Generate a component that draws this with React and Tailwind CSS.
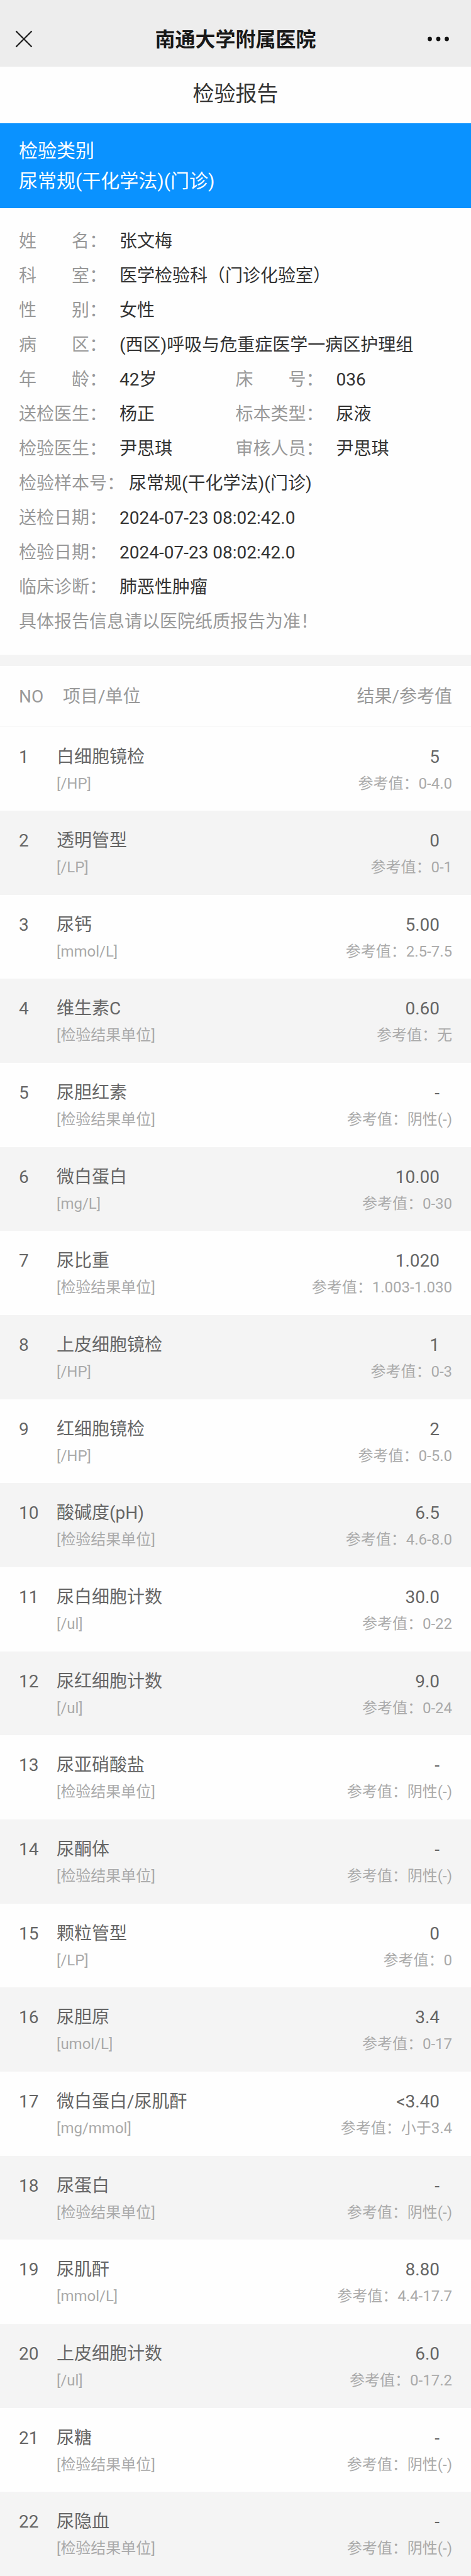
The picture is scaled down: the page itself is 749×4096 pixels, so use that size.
const DETAILS = [
  [["姓　　名：", "张文梅"]],
  [["科　　室：", "医学检验科（门诊化验室）"]],
  [["性　　别：", "女性"]],
  [["病　　区：", "(西区)呼吸与危重症医学一病区护理组"]],
  [["年　　龄：", "42岁"], ["床　　号：", "036"]],
  [["送检医生：", "杨正"], ["标本类型：", "尿液"]],
  [["检验医生：", "尹思琪"], ["审核人员：", "尹思琪"]],
  [["检验样本号：", "尿常规(干化学法)(门诊)"]],
  [["送检日期：", "2024-07-23 08:02:42.0"]],
  [["检验日期：", "2024-07-23 08:02:42.0"]],
  [["临床诊断：", "肺恶性肿瘤"]],
];

const RESULTS = [
  ["白细胞镜检", "/HP", "5", "0-4.0"],
  ["透明管型", "/LP", "0", "0-1"],
  ["尿钙", "mmol/L", "5.00", "2.5-7.5"],
  ["维生素C", "检验结果单位", "0.60", "无"],
  ["尿胆红素", "检验结果单位", "-", "阴性(-)"],
  ["微白蛋白", "mg/L", "10.00", "0-30"],
  ["尿比重", "检验结果单位", "1.020", "1.003-1.030"],
  ["上皮细胞镜检", "/HP", "1", "0-3"],
  ["红细胞镜检", "/HP", "2", "0-5.0"],
  ["酸碱度(pH)", "检验结果单位", "6.5", "4.6-8.0"],
  ["尿白细胞计数", "/ul", "30.0", "0-22"],
  ["尿红细胞计数", "/ul", "9.0", "0-24"],
  ["尿亚硝酸盐", "检验结果单位", "-", "阴性(-)"],
  ["尿酮体", "检验结果单位", "-", "阴性(-)"],
  ["颗粒管型", "/LP", "0", "0"],
  ["尿胆原", "umol/L", "3.4", "0-17"],
  ["微白蛋白/尿肌酐", "mg/mmol", "<3.40", "小于3.4"],
  ["尿蛋白", "检验结果单位", "-", "阴性(-)"],
  ["尿肌酐", "mmol/L", "8.80", "4.4-17.7"],
  ["上皮细胞计数", "/ul", "6.0", "0-17.2"],
  ["尿糖", "检验结果单位", "-", "阴性(-)"],
  ["尿隐血", "检验结果单位", "-", "阴性(-)"],
];

function NavBar() {
  return (
    <header className="flex h-[106px] items-center justify-between bg-[#ededed] px-6 pt-[18px]">
      <button type="button" aria-label="关闭" className="flex w-14">
        <svg viewBox="0 0 28 28" className="size-7" fill="none" stroke="#191919" strokeWidth="2.2">
          <path d="M1.5 1.5 26.5 26.5M26.5 1.5 1.5 26.5" />
        </svg>
      </button>
      <div className="pt-0.5 text-[32px] font-bold leading-[48px] text-[#181818]">南通大学附属医院</div>
      <button type="button" aria-label="更多" className="flex w-14 justify-center">
        <svg viewBox="0 0 36 8" className="h-2 w-9" fill="#111">
          <circle cx="4.5" cy="4" r="3.4" />
          <circle cx="18" cy="4" r="3.4" />
          <circle cx="31.5" cy="4" r="3.4" />
        </svg>
      </button>
    </header>
  );
}

function Details() {
  return (
    <section className="border-b-[18px] border-[#f4f4f4] px-[30px] py-[25px] text-[28px] leading-[55px]">
      <dl>
        {DETAILS.map((row) => (
          <div key={row[0][0]} className={row.length > 1 ? "grid grid-cols-2" : "grid"}>
            {row.map(([label, value]) => (
              <div key={label} className="flex gap-[7px]">
                <dt className="min-w-[153px] text-[#999]">{label}</dt>
                <dd className="text-[#333]">{value}</dd>
              </div>
            ))}
          </div>
        ))}
      </dl>
      <p className="text-[#999]">具体报告信息请以医院纸质报告为准！</p>
    </section>
  );
}

function Results() {
  return (
    <table className="w-full flex-1 border-collapse text-[28px] leading-[42px] text-[#666]">
      <thead>
        <tr className="h-24 border-b border-[#f7f7f7] text-[#999]">
          <th scope="col" className="w-[90px] pt-0.5 pl-[30px] text-left font-normal">NO</th>
          <th scope="col" className="pt-0.5 pl-[10px] text-left font-normal">项目/单位</th>
          <th scope="col" className="pt-0.5 pr-[30px] text-right font-normal">结果/参考值</th>
        </tr>
      </thead>
      <tbody>
        {RESULTS.map(([name, unit, value, range], i) => (
          <tr key={name} className="align-top even:bg-[#f4f4f4]">
            <td className="pt-[27px] pb-5 pl-[30px]">{i + 1}</td>
            <td className="pt-[27px] pb-5">
              <div>{name}</div>
              <div className="text-[24px] text-[#aaa]">[{unit}]</div>
            </td>
            <td className="pt-[27px] pr-[30px] pb-5 text-right">
              <div className="pr-5">{value}</div>
              <div className="text-[24px] text-[#aaa]">参考值：{range}</div>
            </td>
          </tr>
        ))}
      </tbody>
    </table>
  );
}

export default function App() {
  return (
    <main
      lang="zh-CN"
      className="flex min-h-screen flex-col bg-[#fefefe] font-[Roboto,'Noto_Sans_CJK_SC',sans-serif]"
    >
      <NavBar />
      <h1 className="pb-1 text-center text-[34px] leading-[86px] text-[#333]">检验报告</h1>
      <section className="bg-[#0a92ff] px-[30px] pt-5 pb-[19px] text-[30px] leading-[48px] text-white">
        <h2>检验类别</h2>
        <p>尿常规(干化学法)(门诊)</p>
      </section>
      <Details />
      <Results />
    </main>
  );
}
